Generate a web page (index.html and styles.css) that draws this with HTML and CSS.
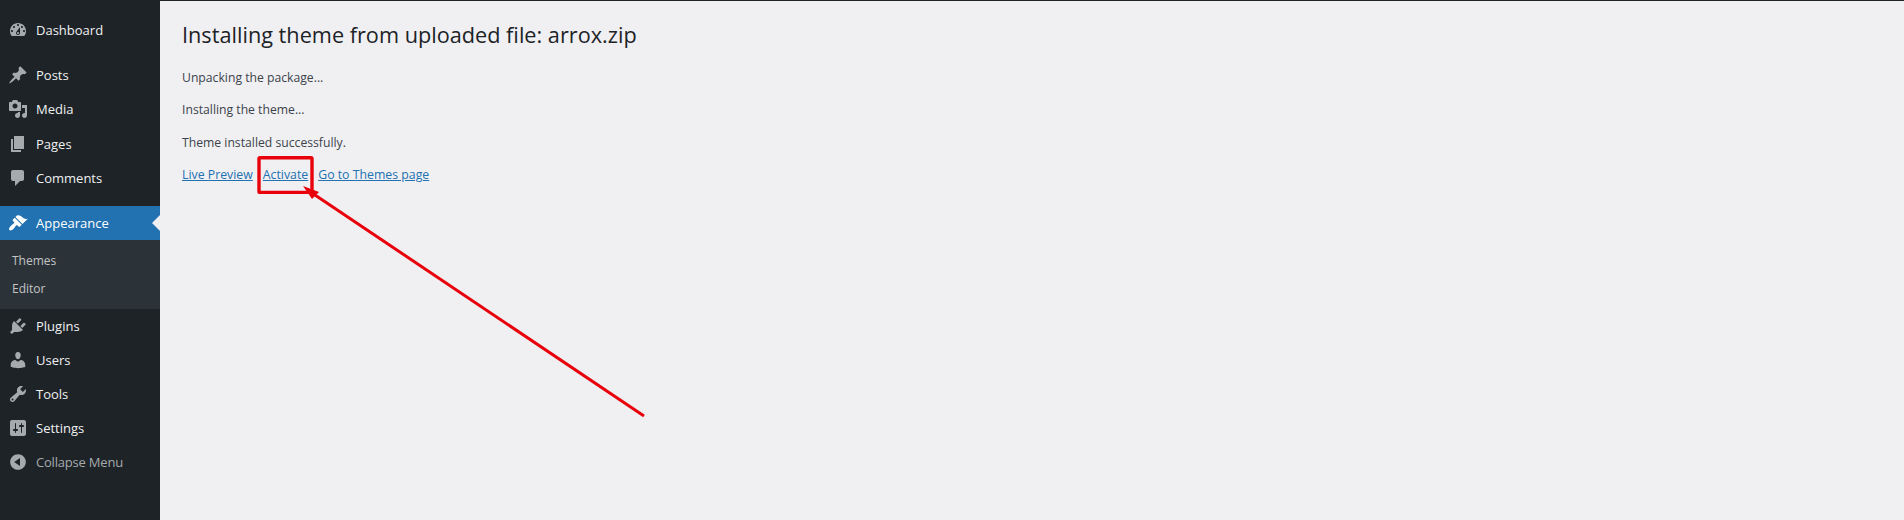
FILE: index.html
```html
<!DOCTYPE html>
<html lang="en">
<head>
<meta charset="utf-8">
<title>Install theme</title>
<link rel="stylesheet" href="styles.css">
</head>
<body>
<div class="shell">
<nav class="menu">
  <a class="item dash"><svg class="ico" viewBox="0 0 20 20"><path d="M3.76 16h12.48c1.1-1.37 1.76-3.11 1.76-5 0-4.42-3.58-8-8-8s-8 3.58-8 8c0 1.89.66 3.63 1.76 5zM10 4c.55 0 1 .45 1 1s-.45 1-1 1-1-.45-1-1 .45-1 1-1zM6 6c.55 0 1 .45 1 1s-.45 1-1 1-1-.45-1-1 .45-1 1-1zm8 0c.55 0 1 .45 1 1s-.45 1-1 1-1-.45-1-1 .45-1 1-1zm-5.37 5.55L12 7v6c0 1.1-.9 2-2 2s-2-.9-2-2c0-.57.24-1.08.63-1.45zM4 10c.55 0 1 .45 1 1s-.45 1-1 1-1-.45-1-1 .45-1 1-1zm12 0c.55 0 1 .45 1 1s-.45 1-1 1-1-.45-1-1 .45-1 1-1zm-5 3c0-.55-.45-1-1-1s-1 .45-1 1 .45 1 1 1 1-.45 1-1z"/></svg><span>Dashboard</span></a>
  <a class="item top"><svg class="ico" viewBox="0 0 20 20"><path d="M10.44 3.02l1.82-1.82 6.36 6.35-1.83 1.82c-1.05-.68-2.48-.57-3.41.36l-.75.75c-.92.93-1.04 2.35-.35 3.41l-1.83 1.82-2.41-2.41-2.8 2.79c-.42.42-3.38 2.71-3.8 2.29s1.86-3.39 2.28-3.81l2.79-2.79L4.1 9.36l1.83-1.82c1.05.69 2.48.57 3.4-.36l.75-.75c.93-.92 1.05-2.35.36-3.41z"/></svg><span>Posts</span></a>
  <a class="item top"><svg class="ico" viewBox="0 0 20 20"><path d="M13 11V4c0-.55-.45-1-1-1h-1.67L9 1H5L3.67 3H2c-.55 0-1 .45-1 1v7c0 .55.45 1 1 1h10c.55 0 1-.45 1-1zM7 4.5c1.38 0 2.5 1.12 2.5 2.5S8.38 9.5 7 9.5 4.5 8.38 4.5 7 5.62 4.5 7 4.5zM14 6h5v10.5c0 1.38-1.12 2.5-2.5 2.5S14 17.88 14 16.5s1.12-2.5 2.5-2.5c.17 0 .34.02.5.05V9h-3V6zm-4 8.05V13h2v3.5c0 1.38-1.12 2.5-2.5 2.5S7 17.88 7 16.5 8.12 14 9.5 14c.17 0 .34.02.5.05z"/></svg><span>Media</span></a>
  <a class="item top"><svg class="ico" viewBox="0 0 20 20"><path d="M6 15V2h10v13H6zm-1 1h8v2H3V5h2v11z"/></svg><span>Pages</span></a>
  <a class="item top"><svg class="ico" viewBox="0 0 20 20"><path d="M5 2h9c1.1 0 2 .9 2 2v7c0 1.1-.9 2-2 2h-2l-5 5v-5H5c-1.1 0-2-.9-2-2V4c0-1.1.9-2 2-2z"/></svg><span>Comments</span></a>
  <a class="item current"><svg class="ico" viewBox="0 0 20 20"><path d="M14.48 11.06L7.41 3.99l1.5-1.5c.5-.56 2.3-.47 3.51.32 1.21.8 1.43 1.28 2.91 2.1 1.18.64 2.45 1.26 4.45.85zm-.71.71L6.7 4.7 4.93 6.47c-.39.39-.39 1.02 0 1.41l1.06 1.06c.39.39.39 1.03 0 1.42-.6.6-1.43 1.11-2.21 1.69-.35.26-.7.53-1.01.84C1.43 14.23.4 16.08 1.4 17.07c.99 1 2.84-.03 4.18-1.36.31-.31.58-.66.85-1.02.57-.78 1.08-1.61 1.69-2.21.39-.39 1.02-.39 1.41 0l1.06 1.06c.39.39 1.02.39 1.41 0z"/></svg><span>Appearance</span></a>
  <div class="sub">
    <a class="subitem">Themes</a>
    <a class="subitem">Editor</a>
  </div>
  <a class="item"><svg class="ico" viewBox="0 0 20 20"><path d="M13.11 4.36L9.87 7.6 8 5.73l3.24-3.24c.35-.34 1.05-.2 1.56.32.52.51.66 1.21.31 1.55zm-8 1.77l.91-1.12 9.01 9.01-1.19.84c-.71.71-2.63 1.16-3.82 1.16H6.14L4.9 17.26c-.59.59-1.54.59-2.12 0-.59-.58-.59-1.53 0-2.12l1.24-1.24v-3.88c0-1.13.4-3.19 1.09-3.89zm7.26 3.97l3.24-3.24c.34-.35 1.04-.21 1.55.31.52.51.66 1.21.31 1.55l-3.24 3.25z"/></svg><span>Plugins</span></a>
  <a class="item"><svg class="ico" viewBox="0 0 20 20"><path d="M10 9.25c-2.27 0-2.73-3.44-2.73-3.44C7 4.02 7.82 2 9.97 2c2.16 0 2.98 2.02 2.71 3.81 0 0-.41 3.44-2.68 3.44zm0 2.57L12.72 10c2.39 0 4.52 2.33 4.52 4.53v2.49s-3.65 1.13-7.24 1.13c-3.65 0-7.24-1.13-7.24-1.13v-2.49c0-2.25 1.94-4.48 4.47-4.48z"/></svg><span>Users</span></a>
  <a class="item"><svg class="ico" viewBox="0 0 20 20"><path d="M16.68 9.77c-1.34 1.34-3.3 1.67-4.95.99l-5.41 6.52c-.99.99-2.59.99-3.58 0s-.99-2.59 0-3.57l6.52-5.42c-.68-1.65-.35-3.61.99-4.95 1.28-1.28 3.12-1.62 4.72-1.06l-2.89 2.89 2.82 2.82 2.86-2.87c.53 1.58.18 3.39-1.08 4.65zM3.81 16.21c.4.39 1.04.39 1.43 0 .4-.4.4-1.04 0-1.43-.39-.4-1.03-.4-1.43 0-.39.39-.39 1.03 0 1.43z"/></svg><span>Tools</span></a>
  <a class="item"><svg class="ico" viewBox="0 0 20 20"><path d="M18 16V4c0-1.1-.9-2-2-2H4c-1.1 0-2 .9-2 2v12c0 1.1.9 2 2 2h12c1.1 0 2-.9 2-2zM8 11h1c.55 0 1 .45 1 1s-.45 1-1 1H8v1.5c0 .28-.22.5-.5.5s-.5-.22-.5-.5V13H6c-.55 0-1-.45-1-1s.45-1 1-1h1V5.5c0-.28.22-.5.5-.5s.5.22.5.5V11zm5-2h-1c-.55 0-1-.45-1-1s.45-1 1-1h1V5.5c0-.28.22-.5.5-.5s.5.22.5.5V7h1c.55 0 1 .45 1 1s-.45 1-1 1h-1v5.5c0 .28-.22.5-.5.5s-.5-.22-.5-.5V9z"/></svg><span>Settings</span></a>
  <a class="item collapse"><svg class="ico" viewBox="0 0 20 20"><path d="M10 2.16c4.33 0 7.84 3.51 7.84 7.84s-3.51 7.84-7.84 7.84S2.16 14.33 2.16 10 5.71 2.16 10 2.16zm2 11.72V6.12L6.18 9.97z"/></svg><span>Collapse Menu</span></a>
</nav>
<main class="content">
  <h1 class="title">Installing theme from uploaded file: arrox.zip</h1>
  <p class="msg">Unpacking the package...</p>
  <p class="msg">Installing the theme...</p>
  <p class="msg">Theme installed successfully.</p>
  <p class="msg links"><a class="lnk">Live Preview</a><a class="lnk">Activate</a><a class="lnk">Go to Themes page</a></p>
</main>
</div>
<svg class="markup" viewBox="0 0 1904 520" width="1904" height="520">
  <rect class="box" x="259" y="157.800" width="53" height="34.600" rx="1"/>
  <line class="arrow" x1="644" y1="416" x2="312" y2="193"/>
  <polygon class="head" points="303,186 319,192 312,199"/>
</svg>
</body>
</html>
```
FILE: styles.css
```css
html, body { margin: 0; padding: 0; }
body {
  background: #f0f0f3;
  font-family: "Open Sans", "Noto Sans", sans-serif;
  font-size: 12.2px;
  color: #3c434a;
  overflow: hidden;
  height: 520px;
  position: relative;
}
.shell { display: flex; height: 520px; }
.menu {
  width: 160px;
  flex: none;
  background: #1d2327;
  padding-top: 13px;
  box-sizing: border-box;
}
.item {
  display: flex;
  align-items: center;
  height: 34px;
  color: #f0f0f1;
  font-size: 13px;
  position: relative;
}
.top { height: 34.25px; }
.dash { margin-bottom: 11px; }
.ico {
  width: 20px;
  height: 20px;
  flex: none;
  margin: 0 8px;
  fill: #a7aaad;
  fill-rule: evenodd;
}
.current { background: #2271b1; color: #fff; margin-top: 11px; }
.current .ico { fill: #fff; }
.current::after {
  content: "";
  position: absolute;
  right: 0;
  top: 9px;
  border: 8px solid transparent;
  border-right-color: #f0f0f3;
  border-left-width: 0;
}
.sub {
  background: #2c3338;
  height: 69px;
  padding: 7px 0;
  box-sizing: border-box;
  display: flex;
  flex-direction: column;
}
.subitem {
  height: 28px;
  line-height: 28px;
  padding-left: 12px;
  color: #c3c4c7;
  font-size: 12px;
}
.collapse { color: #a7aaad; letter-spacing: -0.2px; }
.content {
  flex: 1;
  border-top: 1px solid #1d2327;
  padding: 0 22px;
}
.title {
  font-size: 21.7px;
  font-weight: 400;
  color: #1d2327;
  line-height: 30px;
  margin: 19px 0 18px;
}
.msg {
  margin: 0 0 13px;
  line-height: 19.4px;
}
.links { display: flex; gap: 10px; font-size: 12.3px; }
.lnk { color: #2271b1; text-decoration: underline; }
.markup { position: absolute; left: 0; top: 0; pointer-events: none; }
.box { fill: none; stroke: #e8000b; stroke-width: 3.400; }
.arrow { stroke: #e8000b; stroke-width: 3; }
.head { fill: #e8000b; }
```
